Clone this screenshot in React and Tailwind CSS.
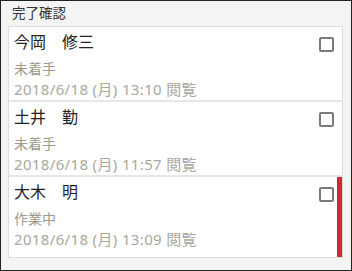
const rows = [
  { name: "今岡　修三", status: "未着手", date: "2018/6/18 (月) 13:10 閲覧", h: "h-[75px]" },
  { name: "土井　勤", status: "未着手", date: "2018/6/18 (月) 11:57 閲覧", h: "h-[75px]" },
  { name: "大木　明", status: "作業中", date: "2018/6/18 (月) 13:09 閲覧", h: "h-[80px]", flag: true },
];

const Row = ({ row, last }) => (
  <div
    className={`relative ${row.h} pl-[5px] ${last ? "" : "border-b-2 border-[#e6e6e6]"}`}
  >
    <p className="pt-[3px] text-[16px] leading-[24px] text-[#222]">{row.name}</p>
    <p className="mt-[5px] text-[14px] leading-[20px] text-[#9a9a8e]">{row.status}</p>
    <p className="text-[15px] leading-[20px] tracking-[0.35px] text-[#a8a8a0]">{row.date}</p>
    <div className="absolute right-[8px] top-[10px] w-[15px] h-[15px] border-2 border-[#7a7a7a] rounded-[2px] bg-white" />
    {row.flag && <div className="absolute right-0 top-0 bottom-0 w-[5px] bg-[#cf2a30]" />}
  </div>
);

export default function App() {
  return (
    <div
      className="w-[352px] h-[271px] border border-[#222] bg-[#f4f4f4] overflow-hidden"
      style={{ fontFamily: '"Noto Sans", "Noto Sans CJK JP", sans-serif' }}
    >
      <div className="h-[25px] px-[11px] pt-[2px] text-[13.5px] leading-[20px] text-[#333]">完了確認</div>
      <div className="ml-[7px] w-[335px] border border-[#dcdcdc] bg-white">
        {rows.map((row, i) => (
          <Row key={i} row={row} last={i === rows.length - 1} />
        ))}
      </div>
    </div>
  );
}
